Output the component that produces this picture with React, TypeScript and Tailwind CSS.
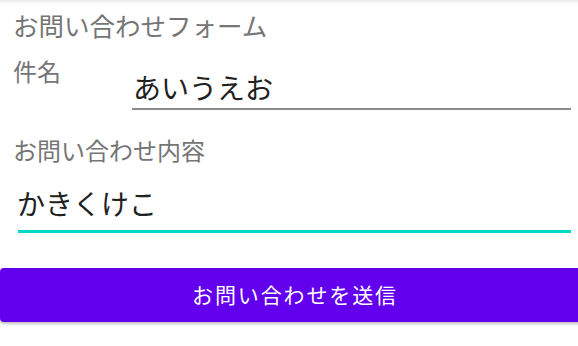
import React from "react";

export default function App() {
  return (
    <div className="relative w-[578px] h-[346px] overflow-hidden bg-white font-['Noto_Sans_CJK_JP','Noto_Sans',sans-serif]">
      <div className="h-[4px] bg-gradient-to-b from-[#e9e9e9] to-white" />
      <div className="mt-[6px] pl-[13px] text-[25.5px] leading-[30px] text-[#757575]">
        お問い合わせフォーム
      </div>
      <div className="mt-[19px] flex items-start">
        <div className="w-[132px] shrink-0 pl-[13px] text-[24px] leading-[24px] text-[#757575]">
          件名
        </div>
        <div className="mt-[12px] w-[439px] border-b-[2px] border-[#8a8a8a] pb-[5px] pl-[1px] text-[28px] leading-[32px] text-[#212121]">
          あいうえお
        </div>
      </div>
      <div className="mt-[28px] pl-[13px] text-[24px] leading-[24px] text-[#757575]">
        お問い合わせ内容
      </div>
      <div className="ml-[18px] mt-[25px] w-[553px] border-b-[3px] border-[#03dac5] pb-[11px] text-[28px] leading-[32px] text-[#212121]">
        <span className="-ml-[1px]">かきくけこ</span>
      </div>
      <button className="mt-[35px] flex h-[54px] w-[590px] items-center justify-center rounded-[4px] bg-[#6200ee] text-[21px] tracking-[0.089em] text-white shadow-[0_2px_3px_rgba(0,0,0,0.25)]">
        お問い合わせを送信
      </button>
    </div>
  );
}
